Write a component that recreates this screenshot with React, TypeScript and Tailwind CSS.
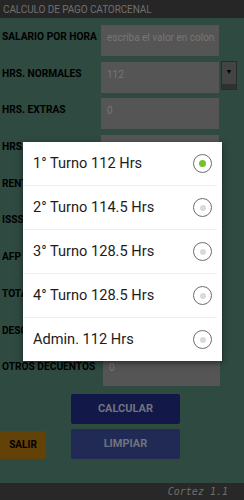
import React from 'react'

const ROWS: { label: string; value: string; select?: boolean }[] = [
  { label: 'SALARIO POR HORA', value: 'escriba el valor en colon' },
  { label: 'HRS. NORMALES', value: '112', select: true },
  { label: 'HRS. EXTRAS', value: '0' },
  { label: 'HRS. NOCTURNAS', value: '' },
  { label: 'RENTA', value: '' },
  { label: 'ISSS', value: '' },
  { label: 'AFP', value: '' },
  { label: 'TOTAL', value: '' },
  { label: 'DESCUENTOS', value: '' },
]

const TURNOS = ['1° Turno 112 Hrs', '2° Turno 114.5 Hrs', '3° Turno 128.5 Hrs', '4° Turno 128.5 Hrs', 'Admin. 112 Hrs']

function Radio({ checked }: { checked: boolean }) {
  return (
    <div className="w-[19px] h-[19px] rounded-full border border-[#6e6e6e] flex items-center justify-center bg-white">
      <div className={checked ? 'w-[7px] h-[7px] rounded-full bg-[#72c22a]' : 'w-[6px] h-[6px] rounded-full bg-[#dadada]'} />
    </div>
  )
}

export default function App() {
  return (
    <div className="relative w-[244px] h-[500px] flex flex-col bg-[#2f4a41] font-['Roboto',sans-serif] overflow-hidden">
      <div className="h-[18px] bg-[#262626] flex items-center pl-[3px] text-[10px] text-[#707070] tracking-[-0.1px]">
        CALCULO DE PAGO CATORCENAL
      </div>

      <div className="pt-[6px] flex flex-col">
        {ROWS.map(r => (
          <div key={r.label} className="h-[36.7px] flex items-start">
            <div className="w-[101px] pl-[2px] pt-[7px] text-[10.2px] leading-[12px] font-bold text-black whitespace-nowrap overflow-hidden">{r.label}</div>
            <div className="mt-px w-[118px] h-[31px] bg-[#555555] pl-[6px] pt-[5px] text-[10px] text-[#767676]">{r.value}</div>
            {r.select && (
              <div className="ml-[2px] w-[16px] h-[29px] bg-[#444444] border border-[#2a2a2a] flex flex-col">
                <div className="flex-1 flex items-center justify-center text-[7px] text-black">▼</div>
                <div className="h-[5px] bg-[#303030]" />
              </div>
            )}
          </div>
        ))}
        <div className="h-[36.7px] flex items-start">
          <div className="w-[103px] pl-[2px] pt-[7px] text-[10.2px] leading-[12px] font-bold text-black whitespace-nowrap">OTROS DECUENTOS</div>
          <div className="mt-px w-[117px] h-[31px] bg-[#555555] pl-[6px] pt-[5px] text-[10px] text-[#767676]">0</div>
        </div>
      </div>

      <div className="mt-[3px] flex flex-col gap-[5px]">
        <div className="ml-[71px] w-[109px] h-[30px] rounded-[2px] bg-[#121948] flex items-center justify-center text-[11px] font-bold text-[#70727f]">CALCULAR</div>
        <div className="flex items-end">
          <div className="w-[46px] h-[28px] rounded-r-[2px] bg-[#634208] flex items-center justify-center text-[10px] font-bold text-black">SALIR</div>
          <div className="ml-[25px] w-[109px] h-[30px] rounded-[2px] bg-[#202a55] flex items-center justify-center text-[11px] font-bold text-[#70727f]">LIMPIAR</div>
        </div>
      </div>

      <div className="flex-1" />
      <div className="h-[17px] bg-[#282828] flex items-center justify-end pr-[16px] text-[10px] italic text-[#6e6e6e] font-['DejaVu_Sans_Mono',monospace]">
        Cortez 1.1
      </div>

      <div className="absolute left-[23px] top-[142px] w-[199px] bg-white shadow-[0_2px_6px_rgba(0,0,0,0.5)] flex flex-col">
        {TURNOS.map((t, i) => (
          <div key={t}>
            {i > 0 && <div className="mr-[5px] h-px bg-[#eeeeee]" />}
            <div className="h-[43px] flex items-center justify-between pl-[10px] pr-[10px]">
              <span className="text-[14.6px] text-[#1c1c1c]">{t}</span>
              <Radio checked={i === 0} />
            </div>
          </div>
        ))}
      </div>
    </div>
  )
}
